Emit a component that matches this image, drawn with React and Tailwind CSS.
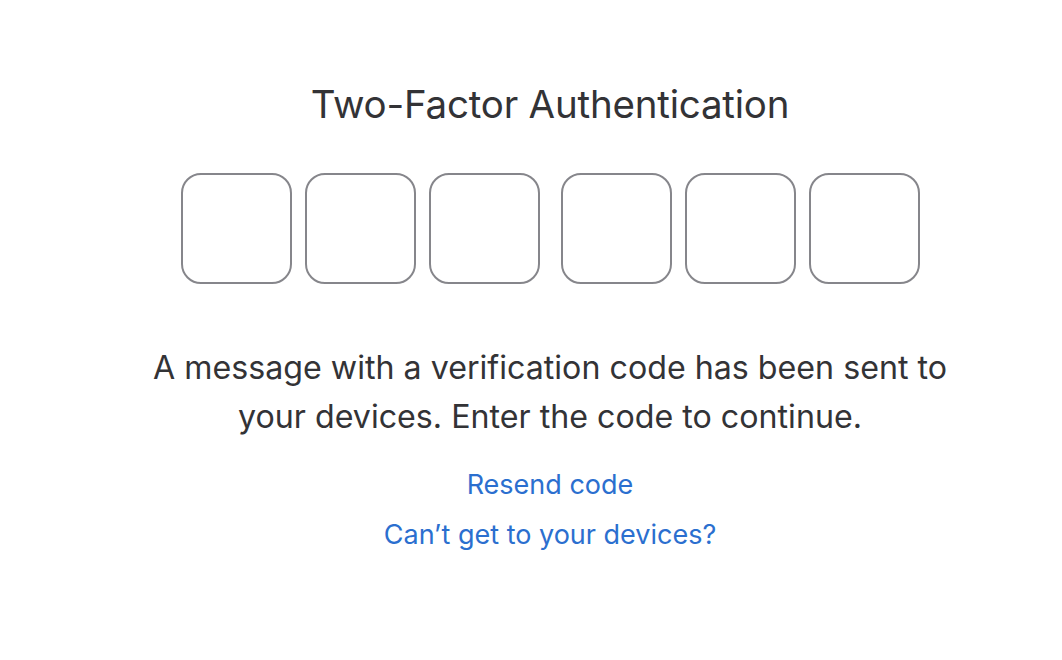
import React from "react";

const CodeBox = () => (
  <input
    type="text"
    maxLength={1}
    className="w-[111px] h-[111px] rounded-[20px] border-2 border-[#86868b] bg-white text-center text-4xl outline-none"
  />
);

export default function App() {
  return (
    <div
      className="min-h-screen bg-white text-[#333336] pl-[38px]"
      style={{ fontFamily: "Inter, 'Noto Sans', sans-serif" }}
    >
      <div className="flex flex-col items-center pt-[82px]">
        <h1 className="text-[38.5px] leading-[44px] font-normal tracking-[-0.2px]">
          Two-Factor Authentication
        </h1>

        <div className="flex gap-[21px] mt-[47px]">
          <div className="flex gap-[13px]">
            <CodeBox />
            <CodeBox />
            <CodeBox />
          </div>
          <div className="flex gap-[13px]">
            <CodeBox />
            <CodeBox />
            <CodeBox />
          </div>
        </div>

        <p className="mt-[59px] text-[32.2px] leading-[49px] text-center">
          A message with a verification code has been sent to
          <br />
          your devices. Enter the code to continue.
        </p>

        <div className="flex flex-col items-center mt-[19px] text-[27px] leading-[50px] text-[#2b6fcf]">
          <a href="#" className="hover:underline">Resend code</a>
          <a href="#" className="hover:underline">Can’t get to your devices?</a>
        </div>
      </div>
    </div>
  );
}
